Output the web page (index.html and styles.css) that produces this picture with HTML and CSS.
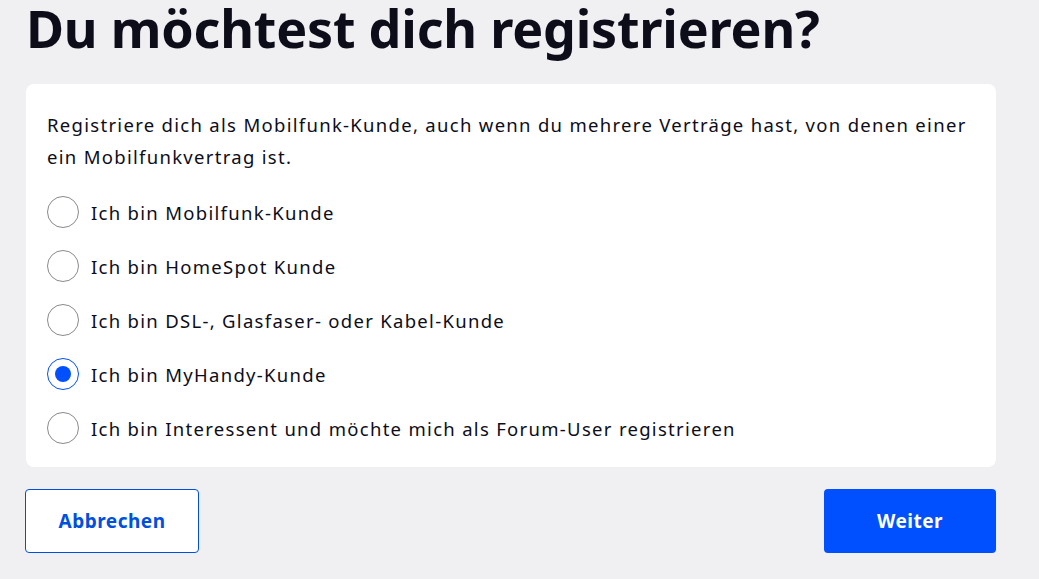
FILE: index.html
```html
<!DOCTYPE html>
<html lang="de">
<head>
    <meta charset="UTF-8">
    <meta name="viewport" content="width=device-width, initial-scale=1.0">
    <title>Registrierung</title>
    <link rel="stylesheet" href="styles.css">
</head>
<body>
    <h1 class="title">Du möchtest dich registrieren?</h1>

    <div class="card">
        <p class="intro">Registriere dich als Mobilfunk-Kunde, auch wenn du mehrere Verträge hast, von denen einer ein Mobilfunkvertrag ist.</p>

        <div class="options">
            <label class="option">
                <input type="radio" name="kunde" value="mobilfunk">
                <span class="radio"></span>
                <span>Ich bin Mobilfunk-Kunde</span>
            </label>
            <label class="option">
                <input type="radio" name="kunde" value="homespot">
                <span class="radio"></span>
                <span>Ich bin HomeSpot Kunde</span>
            </label>
            <label class="option">
                <input type="radio" name="kunde" value="festnetz">
                <span class="radio"></span>
                <span>Ich bin DSL-, Glasfaser- oder Kabel-Kunde</span>
            </label>
            <label class="option">
                <input type="radio" name="kunde" value="myhandy" checked>
                <span class="radio"></span>
                <span>Ich bin MyHandy-Kunde</span>
            </label>
            <label class="option">
                <input type="radio" name="kunde" value="interessent">
                <span class="radio"></span>
                <span>Ich bin Interessent und möchte mich als Forum-User registrieren</span>
            </label>
        </div>
    </div>

    <div class="actions">
        <button class="btn btn-secondary">Abbrechen</button>
        <button class="btn btn-primary">Weiter</button>
    </div>
</body>
</html>
```

FILE: styles.css
```css
body {
    margin: 0;
    padding: 0 43px 0 26px;
    background: #f0f0f3;
    font-family: 'Noto Sans', 'Open Sans', Arial, sans-serif;
    color: #0d0d1a;
}

.title {
    margin: 0;
    font-size: 52px;
    line-height: 56px;
    font-weight: 700;
    letter-spacing: -0.2px;
    color: #0d0d1a;
}

.card {
    margin-top: 28px;
    background: #fff;
    border-radius: 8px;
    padding: 25px 21px 12px 21px;
}

.intro {
    margin: 0 0 12px 0;
    font-size: 18.5px;
    line-height: 32px;
    letter-spacing: 1.3px;
}

.options {
    display: flex;
    flex-direction: column;
}

.option {
    display: flex;
    align-items: center;
    gap: 12px;
    height: 54px;
    font-size: 18.5px;
    letter-spacing: 1.3px;
    cursor: pointer;
}

.option input {
    display: none;
}

.radio {
    width: 30px;
    height: 30px;
    border: 1px solid #8a8a8f;
    border-radius: 50%;
    box-sizing: content-box;
    display: flex;
    align-items: center;
    justify-content: center;
    flex-shrink: 0;
}

.option input:checked + .radio {
    border-color: #0050ff;
}

.option input:checked + .radio::after {
    content: "";
    width: 16px;
    height: 16px;
    border-radius: 50%;
    background: #0050ff;
}

.actions {
    display: flex;
    justify-content: space-between;
    margin-top: 22px;
}

.btn {
    height: 64px;
    border-radius: 4px;
    font-family: 'Noto Sans', 'Open Sans', Arial, sans-serif;
    font-size: 19px;
    font-weight: 700;
    letter-spacing: 0.5px;
    cursor: pointer;
}

.btn-secondary {
    width: 174px;
    margin-left: -1px;
    background: #fff;
    color: #0050e0;
    border: 1px solid #0050e0;
}

.btn-primary {
    width: 172px;
    background: #0050ff;
    color: #fff;
    border: none;
}
```
